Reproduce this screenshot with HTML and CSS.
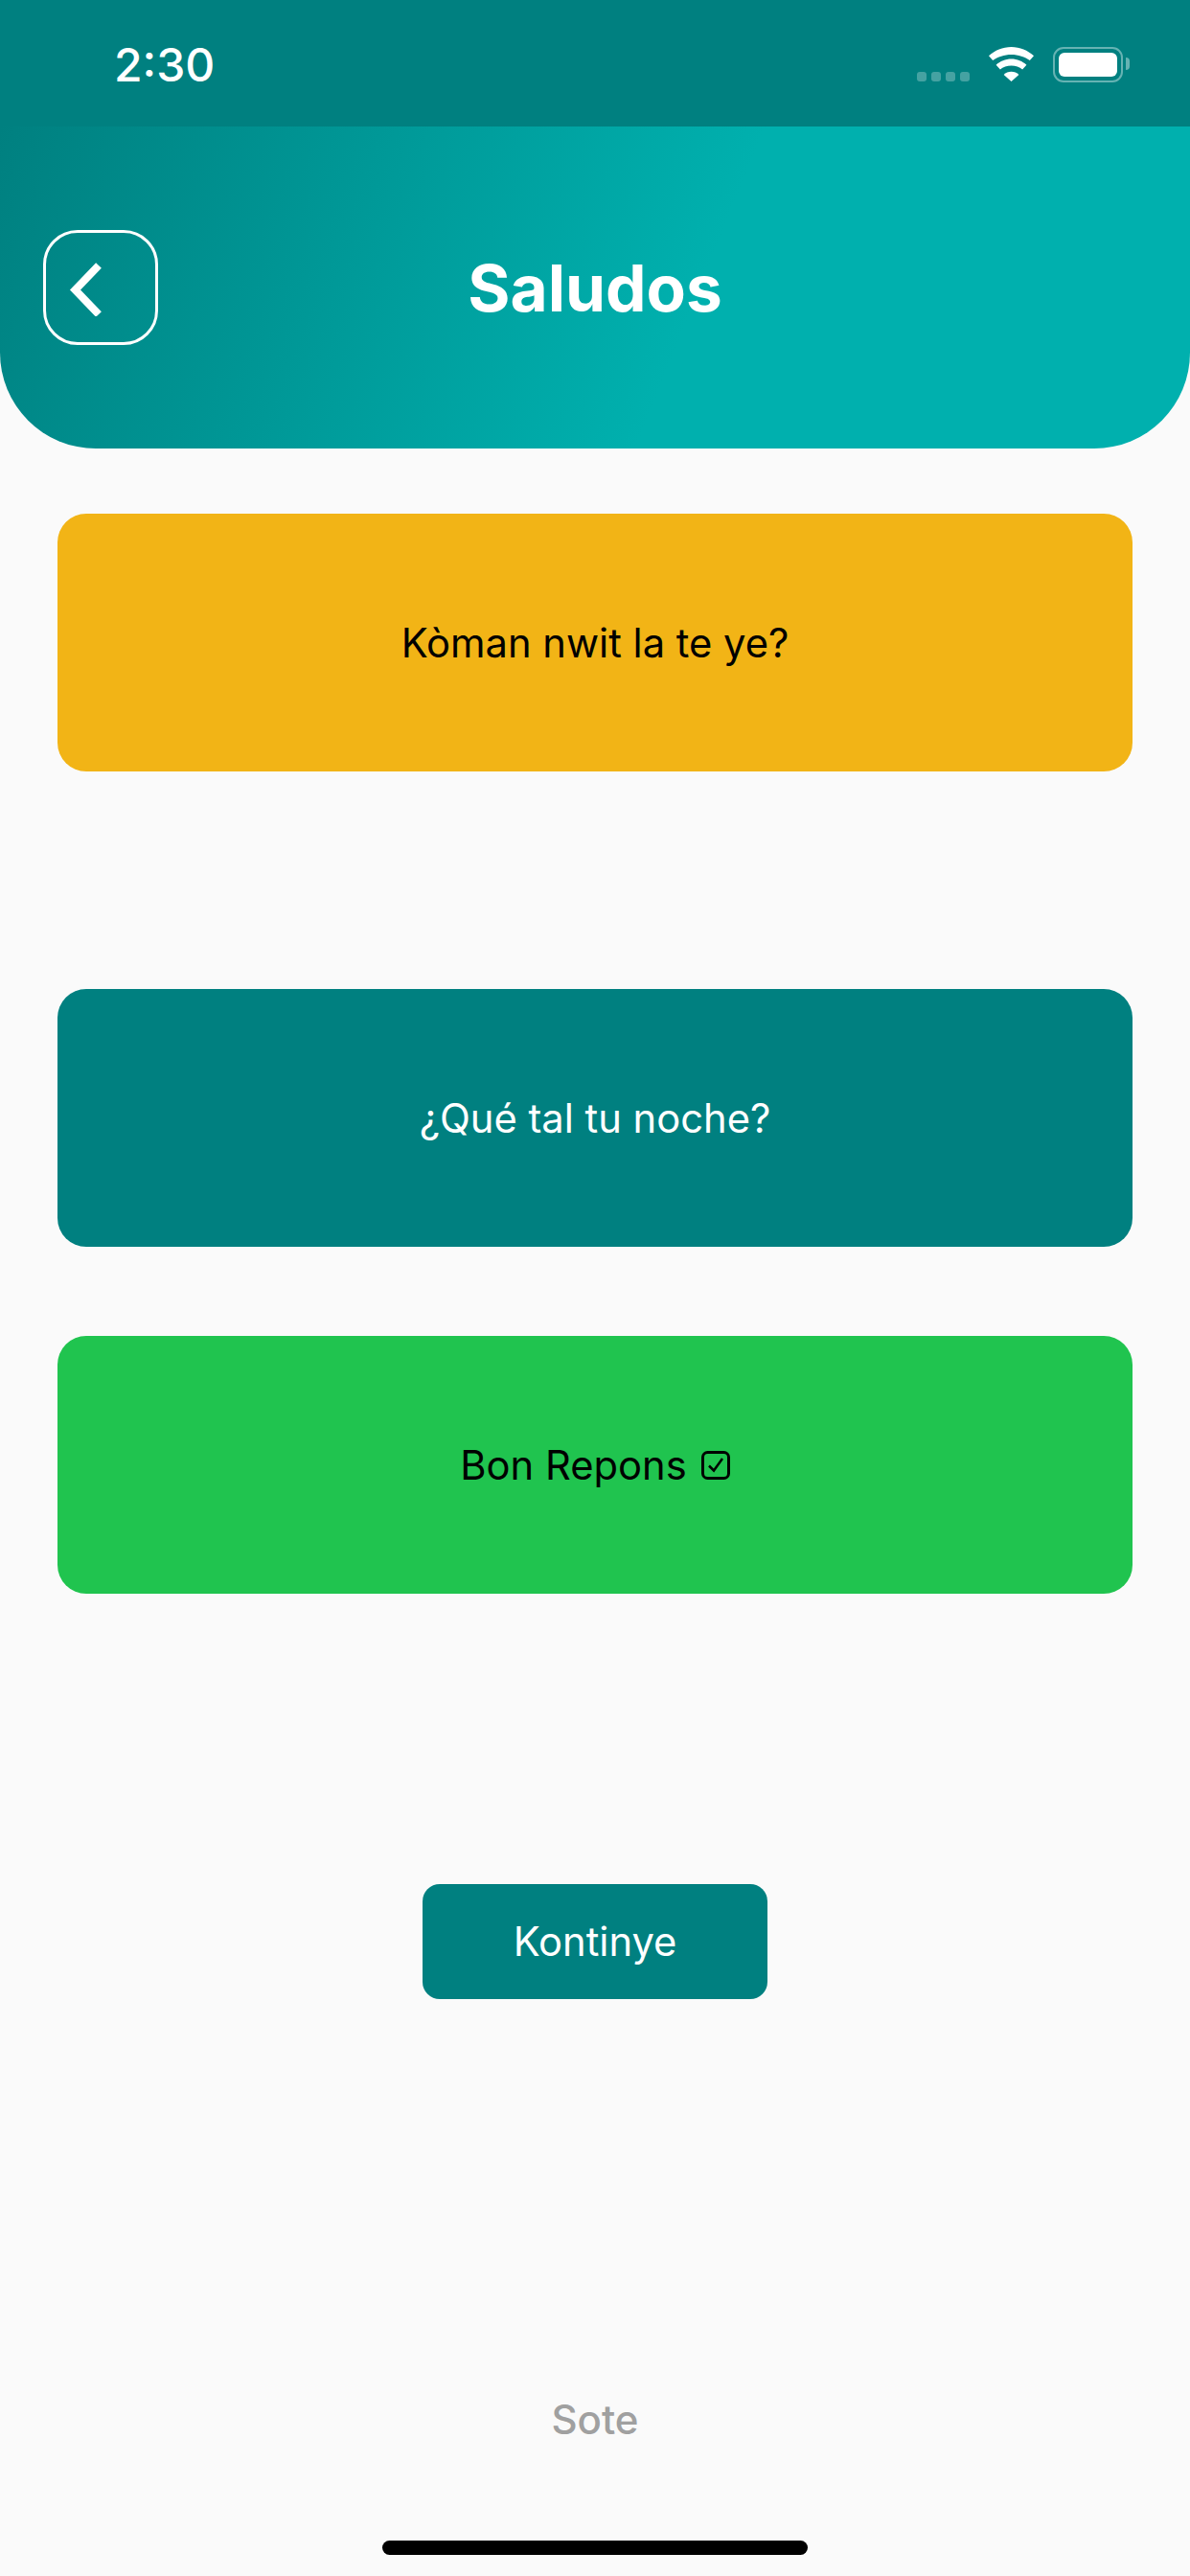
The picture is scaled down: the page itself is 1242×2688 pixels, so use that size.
FILE: index.html
```html
<!DOCTYPE html>
<html lang="en">

<head>
    <meta charset="UTF-8">
    <meta name="viewport" content="width=device-width, initial-scale=1.0">
    <title>Saludos</title>
    <link rel="stylesheet" href="styles.css">
</head>

<body>
    <div class="status-bar">
        <span class="time">2:30</span>
        <div class="status-icons">
            <div class="signal">
                <span></span><span></span><span></span><span></span>
            </div>
            <svg class="wifi" width="47" height="36" viewBox="0 0 47 36">
                <path fill="#fff" d="M23.5 0C14.5 0 6.3 3.5 0 9.300l4.200 4.800C9.400 10.400 16.100 8 23.500 8s14.100 2.400 19.300 6.100L47 9.300C40.700 3.500 32.500 0 23.500 0z" />
                <path fill="#fff" d="M23.500 12.500c-6.100 0-11.700 2.400-15.900 6.200l4.300 4.900c3-2.500 7.100-4 11.600-4s8.600 1.500 11.600 4l4.300-4.900c-4.200-3.800-9.800-6.200-15.900-6.200z" />
                <path fill="#fff" d="M23.500 25.800c-3 0-5.800 1.200-7.900 3.100L23.500 36l7.900-7.100c-2.100-1.900-4.900-3.100-7.900-3.100z" />
            </svg>
            <div class="battery">
                <div class="battery-level"></div>
            </div>
        </div>
    </div>

    <header class="header">
        <button class="back-btn" type="button">
            <svg width="40" height="60" viewBox="0 0 40 60">
                <path d="M34 7 L9.500 32.500 L34 58" fill="none" stroke="#fff" stroke-width="8" />
            </svg>
        </button>
        <h1>Saludos</h1>
    </header>

    <main class="content">
        <div class="card card-yellow">Kòman nwit la te ye?</div>
        <div class="card card-teal">¿Qué tal tu noche?</div>
        <div class="card card-green">
            Bon Repons
            <svg class="check" width="30" height="30" viewBox="0 0 30 30">
                <rect x="1.500" y="1.500" width="27" height="27" rx="5" fill="none" stroke="#000" stroke-width="3" />
                <path d="M8 15.500 L13 20.500 L22 8" fill="none" stroke="#000" stroke-width="2.500" />
            </svg>
        </div>
        <button class="continue-btn" type="button">Kontinye</button>
        <a class="skip" href="#">Sote</a>
        <div class="home-bar"></div>
    </main>
</body>

</html>
```

FILE: styles.css
```css
:root {
    --teal: #008080;
    --teal-light: #00b0ae;
}

* {
    box-sizing: border-box;
}

body {
    margin: 0;
    width: 1242px;
    height: 2688px;
    overflow: hidden;
    background-color: #fafafa;
    font-family: Inter, "Liberation Sans", sans-serif;
}

.status-bar {
    height: 132px;
    background-color: var(--teal);
    display: flex;
    justify-content: space-between;
    align-items: flex-start;
    padding: 49px 70px 0 119px;
    color: white;
}

.time {
    font-size: 48px;
    line-height: 37px;
    font-weight: 500;
}

.status-icons {
    display: flex;
    align-items: flex-start;
}

.signal {
    display: flex;
    gap: 5px;
    margin: 26px 20px 0 0;
}

.signal span {
    width: 10px;
    height: 10px;
    border-radius: 3px;
    background-color: rgba(255, 255, 255, 0.27);
}

.battery {
    position: relative;
    width: 73px;
    height: 37px;
    margin-left: 20px;
    padding: 4px;
    border: 2px solid rgba(255, 255, 255, 0.4);
    border-radius: 11px;
}

.battery::after {
    content: "";
    position: absolute;
    right: -9px;
    top: 9px;
    width: 4px;
    height: 13px;
    border-radius: 0 7px 7px 0;
    background-color: rgba(255, 255, 255, 0.4);
}

.battery-level {
    height: 100%;
    border-radius: 6px;
    background-color: white;
}

.header {
    position: relative;
    height: 336px;
    display: flex;
    justify-content: center;
    align-items: center;
    background: linear-gradient(112deg, var(--teal) 0%, var(--teal-light) 58%);
    border-radius: 0 0 100px 100px;
}

.header h1 {
    margin: 0;
    font-size: 67.500px;
    font-weight: 700;
    color: white;
}

.back-btn {
    position: absolute;
    left: 45px;
    top: 108px;
    width: 120px;
    height: 120px;
    display: flex;
    align-items: center;
    padding: 0 0 0 21px;
    background: none;
    border: 3px solid white;
    border-radius: 36px;
}

.content {
    display: flex;
    flex-direction: column;
    align-items: center;
    padding: 68px 60px 0;
}

.card {
    width: 100%;
    height: 269px;
    display: flex;
    justify-content: center;
    align-items: center;
    gap: 15px;
    border-radius: 30px;
    font-size: 41.700px;
    color: black;
}

.card-yellow {
    background-color: #f2b416;
    margin-bottom: 227px;
}

.card-teal {
    background-color: var(--teal);
    color: white;
    margin-bottom: 93px;
}

.card-green {
    background-color: #20c44f;
    margin-bottom: 303px;
}

.continue-btn {
    width: 360px;
    height: 120px;
    padding-bottom: 2px;
    background-color: var(--teal);
    color: white;
    border: none;
    border-radius: 18px;
    font-family: inherit;
    font-size: 41.700px;
}

.skip {
    margin-top: 409px;
    line-height: 60px;
    font-size: 42px;
    font-weight: 500;
    color: #a0a0a0;
    text-decoration: none;
}

.home-bar {
    width: 444px;
    height: 15px;
    margin-top: 96px;
    border-radius: 8px;
    background-color: black;
}
```
